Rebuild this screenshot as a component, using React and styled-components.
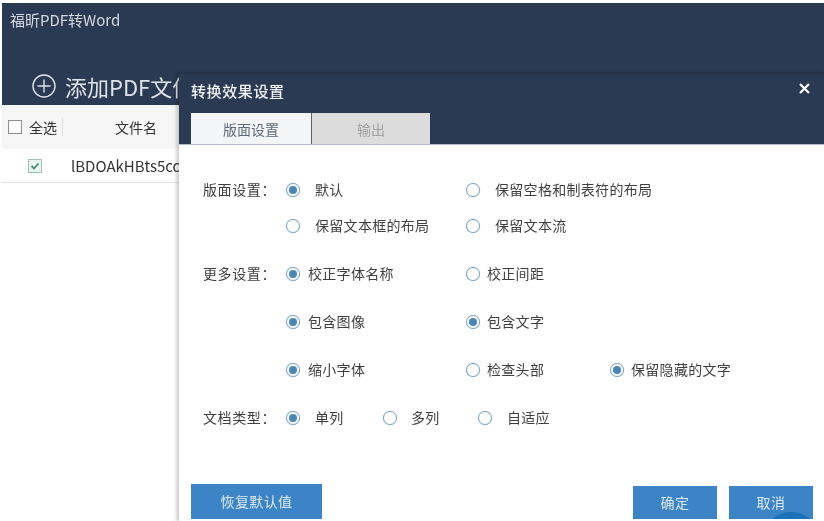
import React from "react";
import styled, { createGlobalStyle } from "styled-components";

const GlobalStyle = createGlobalStyle`
  html, body {
    margin: 0;
    padding: 0;
    background: #fff;
  }
  body {
    font-family: "Noto Sans CJK SC", "Noto Sans", sans-serif;
    color: #333;
  }
`;

const Page = styled.div`
  position: relative;
  width: 824px;
  height: 521px;
  overflow: hidden;
  background: #fff;
  padding: 3px 0 0 2px;
  box-sizing: border-box;
  filter: blur(0.3px);
`;

const TopBar = styled.header`
  height: 102px;
  background: #2a3a52;
  color: #d5dae1;
  display: flex;
  flex-direction: column;
  justify-content: space-between;
  box-sizing: border-box;
  padding: 7px 0 3px 8px;
`;

const AppTitle = styled.div`
  font-size: 15px;
  line-height: 20px;
`;

const AddFile = styled.div`
  display: flex;
  align-items: center;
  gap: 9px;
  margin-left: 22px;
  font-size: 22px;
  line-height: 32px;
  color: #dfe3e8;
  white-space: nowrap;
`;

const ListHead = styled.div`
  height: 44px;
  background: #f6f6f6;
  display: flex;
  align-items: center;
  font-size: 14px;
`;

const CheckBox = styled.span`
  width: 14px;
  height: 14px;
  box-sizing: border-box;
  border: 1px solid ${props => (props.checked ? "#9fc2b4" : "#8d8d8d")};
  background: ${props => (props.checked ? "#e9f3ef" : "#fff")};
  display: inline-flex;
  align-items: center;
  justify-content: center;
  flex: none;
`;

const SelectAll = styled.div`
  display: flex;
  align-items: center;
  gap: 7px;
  margin-left: 6px;
  padding-right: 5px;
  border-right: 1px solid #dedede;
  line-height: 18px;
`;

const ColName = styled.div`
  margin-left: 52px;
`;

const FileRow = styled.div`
  height: 33px;
  display: flex;
  align-items: center;
  border-bottom: 1px solid #e4e4e4;
  padding-left: 26px;
  gap: 29px;
  font-size: 15px;
  white-space: nowrap;
`;

const Dialog = styled.section`
  position: absolute;
  left: 179px;
  top: 72px;
  right: 0;
  bottom: 0;
  background: #fff;
  box-shadow: -3px 0 3px rgba(0, 0, 0, 0.18);
  display: flex;
  flex-direction: column;
`;

const DialogHead = styled.div`
  height: 73px;
  flex: none;
  background: #2a3a52;
  border-top: 2px solid #243146;
  border-bottom: 1px solid #aebccb;
  box-sizing: border-box;
  display: flex;
  flex-direction: column;
  justify-content: space-between;
  padding-left: 12px;
`;

const TitleRow = styled.div`
  display: flex;
  justify-content: space-between;
  align-items: center;
  height: 32px;
  padding-right: 14px;

  svg {
    margin-bottom: 3px;
  }
`;

const DialogTitle = styled.div`
  color: #f4f5f7;
  font-size: 15px;
  font-weight: 500;
  letter-spacing: 0.6px;
`;

const Tabs = styled.div`
  display: flex;
`;

const Tab = styled.div`
  width: ${props => (props.active ? "120px" : "119px")};
  height: 31px;
  box-sizing: border-box;
  background: ${props => (props.active ? "#f4f5f7" : "#dcdcdc")};
  border-left: ${props => (props.active ? "none" : "1px solid #5c6470")};
  color: ${props => (props.active ? "#5b6b7c" : "#a2a2a2")};
  font-size: 14px;
  display: flex;
  align-items: center;
  justify-content: center;
`;

const Form = styled.div`
  padding: 35px 0 0 24px;
  font-size: 14px;
  letter-spacing: 0.3px;
  color: #3f3f3f;
`;

const Row = styled.div`
  display: flex;
  align-items: center;
  height: 20px;
  margin-bottom: ${props => props.gap}px;
`;

const RowLabel = styled.div`
  width: 83px;
  flex: none;
  white-space: pre;
  line-height: 18px;
  padding-bottom: 2px;
  letter-spacing: 0.6px;
`;

const Option = styled.div`
  width: ${props => props.width}px;
  flex: none;
  display: flex;
  align-items: center;
  gap: ${props => props.space}px;
  white-space: nowrap;

  span:last-child {
    line-height: 18px;
    padding-bottom: 2px;
  }
`;

const Radio = styled.span`
  width: 14px;
  height: 14px;
  box-sizing: border-box;
  border-radius: 50%;
  border: 1px solid #7fa8c0;
  box-shadow: 0 0 1px #9cc0d6;
  background: #fff;
  flex: none;
  display: flex;
  align-items: center;
  justify-content: center;

  &::after {
    content: "";
    width: 8px;
    height: 8px;
    border-radius: 50%;
    background: ${props => (props.on ? "#4a86b5" : "transparent")};
  }
`;

const Footer = styled.div`
  margin-top: auto;
  display: flex;
  align-items: flex-end;
  padding: 0 11px 2px 12px;
`;

const Button = styled.button`
  position: relative;
  overflow: hidden;
  border: none;
  padding: 0 0 2px;
  background: #3d84c6;
  color: #dbe8f3;
  font-family: inherit;
  font-size: 14px;
  letter-spacing: 0.4px;
  width: ${props => props.width}px;
  height: ${props => props.height}px;
  margin-left: ${props => props.offset || 0}px;
`;

const CornerBlob = styled.span`
  position: absolute;
  left: 40px;
  top: 26px;
  width: 44px;
  height: 30px;
  border-radius: 50%;
  background: #1d71b8;
`;

function Choice({ on, label, width, space = 15 }) {
  return (
    <Option width={width} space={space}>
      <Radio on={on} />
      <span>{label}</span>
    </Option>
  );
}

export default function App() {
  return (
    <Page>
      <GlobalStyle />
      <TopBar>
        <AppTitle>福昕PDF转Word</AppTitle>
        <AddFile>
          <svg width="24" height="24" viewBox="0 0 24 24" fill="none" stroke="#dfe3e8" strokeWidth="1.4">
            <circle cx="12" cy="12" r="11" />
            <path d="M12 5.5v13M5.5 12h13" />
          </svg>
          添加PDF文件
        </AddFile>
      </TopBar>
      <ListHead>
        <SelectAll>
          <CheckBox />
          全选
        </SelectAll>
        <ColName>文件名</ColName>
      </ListHead>
      <FileRow>
        <CheckBox checked>
          <svg width="10" height="10" viewBox="0 0 10 10" fill="none" stroke="#3f8f78" strokeWidth="1.8">
            <path d="M1.5 5l2.5 2.5L8.5 2.5" />
          </svg>
        </CheckBox>
        lBDOAkHBts5cq
      </FileRow>

      <Dialog>
        <DialogHead>
          <TitleRow>
            <DialogTitle>转换效果设置</DialogTitle>
            <svg width="11" height="11" viewBox="0 0 11 11" stroke="#fff" strokeWidth="2.2">
              <path d="M1 1l9 9M10 1l-9 9" />
            </svg>
          </TitleRow>
          <Tabs>
            <Tab active>版面设置</Tab>
            <Tab>输出</Tab>
          </Tabs>
        </DialogHead>
        <Form>
          <Row gap={16}>
            <RowLabel>版面设置：</RowLabel>
            <Choice on label="默认" width={180} />
            <Choice label="保留空格和制表符的布局" width={300} />
          </Row>
          <Row gap={28}>
            <RowLabel />
            <Choice label="保留文本框的布局" width={180} />
            <Choice label="保留文本流" width={300} />
          </Row>
          <Row gap={28}>
            <RowLabel>更多设置：</RowLabel>
            <Choice on label="校正字体名称" width={180} space={8} />
            <Choice label="校正间距" width={144} space={7} />
          </Row>
          <Row gap={28}>
            <RowLabel />
            <Choice on label="包含图像" width={180} space={8} />
            <Choice on label="包含文字" width={144} space={7} />
          </Row>
          <Row gap={28}>
            <RowLabel />
            <Choice on label="缩小字体" width={180} space={8} />
            <Choice label="检查头部" width={144} space={7} />
            <Choice on label="保留隐藏的文字" width={160} space={7} />
          </Row>
          <Row gap={0}>
            <RowLabel>文档类型：</RowLabel>
            <Choice on label="单列" width={97} />
            <Choice label="多列" width={95} space={14} />
            <Choice label="自适应" width={120} space={15} />
          </Row>
        </Form>
        <Footer>
          <Button width={131} height={35}>恢复默认值</Button>
          <Button width={84} height={33} offset={311}>确定</Button>
          <Button width={84} height={33} offset={12}>
            取消
            <CornerBlob />
          </Button>
        </Footer>
      </Dialog>
    </Page>
  );
}
